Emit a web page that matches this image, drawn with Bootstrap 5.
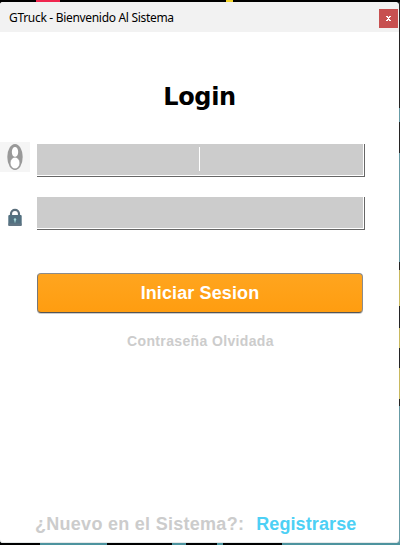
<!DOCTYPE html>
<html lang="es">
<head>
<meta charset="utf-8">
<title>GTruck - Bienvenido Al Sistema</title>
<link href="https://cdn.jsdelivr.net/npm/bootstrap@5.3.0/dist/css/bootstrap.min.css" rel="stylesheet">
<style>
html, body { height: 545px; }
body { width: 400px; background: #050505; padding: 2px 1px 2px 0; font-family: "Liberation Sans", Arial, sans-serif;
  background-image:
    linear-gradient(90deg, #000 36px, #f0274f 36px 60px, #000 60px 226px, #f2d32c 226px 233px, #000 233px),
    linear-gradient(90deg, #000 40px, #4d939e 40px 107px, #000 107px 172px, #4d939e 172px 186px, #000 186px 217px, #4d939e 217px 223px, #000 223px 282px, #4d939e 282px),
    linear-gradient(#242424 108px, #679ba5 108px 122px, #242424 122px 153px, #679ba5 153px 262px, #242424 262px 270px, #c9b95f 270px 306px, #242424 306px 328px, #c9b95f 328px 348px, #242424 348px 368px, #c9b95f 368px 399px, #242424 399px 406px, #679ba5 406px);
  background-size: 400px 2px, 400px 2px, 4px 545px;
  background-position: 0 0, 0 543px, 396px 0;
  background-repeat: no-repeat; }
.login-window { height: 541px; background: #fff; border-radius: 3px 4px 4px 3px; box-shadow: inset 0 -1px #e4e8e9; }
.title-bar { height: 30px; background: #f2f2f2; padding: 1px 1px 0 9px; }
.title-text { font: 12px/28px "Noto Sans", "Open Sans", sans-serif; color: #000; white-space: nowrap; letter-spacing: -.31px; }
.close-box { width: 19px; height: 19px; background: #c75050; border-radius: 0; margin-top: 2px; }
.heading { font: bold 24px/30px "DejaVu Sans", "Noto Sans", sans-serif; color: #000; margin-top: 50px; letter-spacing: -.35px; }
.field-row { height: 33px; }
.first-row { margin-top: 32px; }
.second-row { margin-top: 20px; }
.icon-cell { width: 37px; height: 33px; }
.user-icon { margin-top: -2px; }
.lock-icon { margin-top: 1px; }
.entry { width: 328px; height: 33px; background: #ccc; border: 0; border-right: 1px solid #666; border-bottom: 1px solid #666; border-radius: 0; box-shadow: inset -1px -1px #fff; }
.caret { width: 1px; height: 24px; background: #fff; margin: 3px 0 0 162px; }
.btn-start { width: 326px; height: 40px; margin: 43px 0 0 37px; border: 1px solid #8b8b8b; border-bottom-color: #555; border-left-color: #777; border-radius: 4px; background: linear-gradient(#ffa51f, #ff9d10); color: #fff; font-size: 18px; line-height: 36px; letter-spacing: .12px; box-shadow: 0 1px #ccc; }
.btn-start:hover { color: #fff; background: #ff9d10; }
.forgot { color: #ccc; font-size: 14px; line-height: 18px; margin-top: 19px; padding-left: 2px; letter-spacing: .36px; }
.signup { font-size: 18px; line-height: 24px; padding: 0 0 7px 35px; color: #ccc; white-space: nowrap; letter-spacing: .28px; }
.signup a { color: #4dd0f5; margin-left: 12px; letter-spacing: .1px; }
</style>
</head>
<body>
<main class="login-window d-flex flex-column overflow-hidden">
  <header class="title-bar d-flex justify-content-between align-items-center flex-shrink-0">
    <span class="title-text">GTruck - Bienvenido Al Sistema</span>
    <button class="close-box btn p-0 border-0 d-flex align-items-center justify-content-center" aria-label="Cerrar">
      <svg width="5" height="5" shape-rendering="crispEdges" fill="#fff"><path d="M0 0h2v1H0zM3 0h2v1H3zM1 1h3v1H1zM2 2h1v1H2zM1 3h3v1H1zM0 4h2v1H0zM3 4h2v1H3z"/></svg>
    </button>
  </header>
  <h1 class="heading text-center mb-0">Login</h1>
  <form class="flex-grow-1 d-flex flex-column">
    <div class="field-row first-row d-flex">
      <div class="icon-cell">
        <svg class="user-icon d-block" width="30" height="30" viewBox="0 0 30 30"><path fill="#f5f5f5" d="M0 0h30v30H0z"/><ellipse cx="15" cy="15" rx="7.7" ry="13" fill="#999"/><ellipse cx="15" cy="10" rx="3.2" ry="5" fill="#fff"/><ellipse cx="15" cy="21" rx="4.8" ry="5.8" fill="#fff" stroke="#999" stroke-width=".5"/></svg>
      </div>
      <div class="entry" role="textbox" aria-label="Usuario"><div class="caret"></div></div>
    </div>
    <div class="field-row second-row d-flex">
      <div class="icon-cell">
        <svg class="lock-icon d-block" width="30" height="33" viewBox="0 0 30 33"><path d="M11 18v-2.2a4 4 0 0 1 8 0V18" fill="none" stroke="#5b6f7c" stroke-width="2.2"/><rect x="8.3" y="17" width="13.4" height="11" rx="1" fill="#527080"/><path d="M8.5 25.5h13V27a1 1 0 0 1-1 1h-11a1 1 0 0 1-1-1z" fill="#627583"/><circle cx="15" cy="21.5" r="1.2" fill="#a5d8d8"/><path d="M14.5 21.5h1v3h-1z" fill="#a5d8d8"/></svg>
      </div>
      <div class="entry" role="textbox" aria-label="Clave"></div>
    </div>
    <button type="button" class="btn btn-start fw-bold p-0">Iniciar Sesion</button>
    <div class="forgot fw-bold text-center">Contraseña Olvidada</div>
    <div class="signup fw-bold mt-auto"><span>¿Nuevo en el Sistema?:</span><a href="#" class="text-decoration-none">Registrarse</a></div>
  </form>
</main>
<script src="https://cdn.jsdelivr.net/npm/bootstrap@5.3.0/dist/js/bootstrap.bundle.min.js"></script>
</body>
</html>
